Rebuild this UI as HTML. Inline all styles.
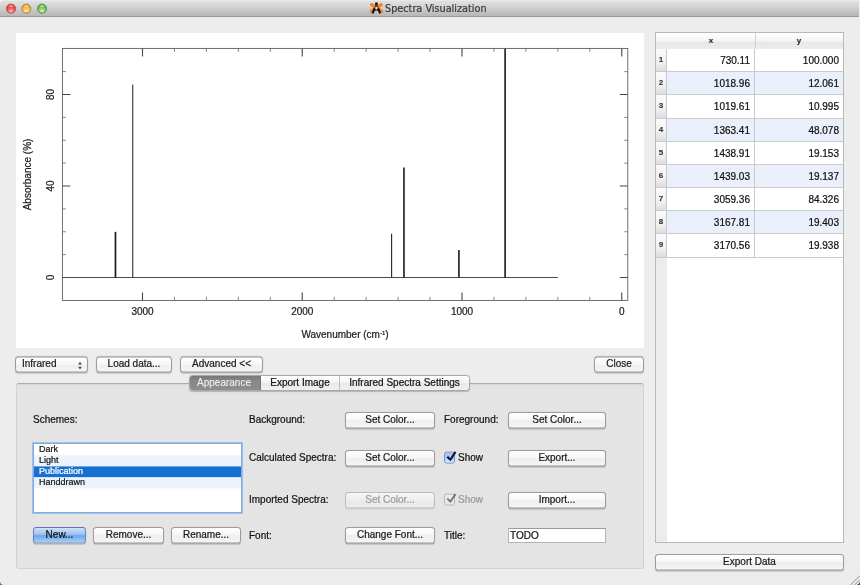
<!DOCTYPE html>
<html lang="en"><head><meta charset="utf-8"><title>Spectra Visualization</title>
<style>
html,body{margin:0;padding:0}
html{background:#fff}
body{width:860px;height:585px;overflow:hidden;background:#fff;position:relative;font-family:"Liberation Sans",sans-serif;font-size:10px;color:#141414;-webkit-text-stroke:0.22px}
.abs,.btn,.lbl{position:absolute;box-sizing:border-box}
.titlebar{position:absolute;left:0;top:0;width:860px;height:17px;box-sizing:border-box;background:linear-gradient(#eeeeee 0,#dfdfdf 10%,#cfcfcf 50%,#b7b7b7 100%);border-bottom:1px solid #999999;border-radius:4px 4px 0 0}
.tl{position:absolute;top:3px;transform:translateY(0.6px);width:10px;height:10px;border-radius:50%;box-sizing:border-box}
.tl.r{left:6px;background:radial-gradient(ellipse 3px 1.4px at 50% 20%,rgba(255,255,255,.75),rgba(255,255,255,0)),radial-gradient(circle at 50% 88%,#ffc8c4 0,#fa5a50 42%,#cf3a30 85%,#b03028 100%);border:0.5px solid #b04038}
.tl.y{left:21px;transform:translate(0.3px,0.6px);background:radial-gradient(ellipse 3px 1.4px at 50% 20%,rgba(255,255,255,.75),rgba(255,255,255,0)),radial-gradient(circle at 50% 88%,#fff2b4 0,#f9c24c 42%,#d89526 85%,#b87c1c 100%);border:0.5px solid #b08028}
.tl.g{left:37px;background:radial-gradient(ellipse 3px 1.4px at 50% 20%,rgba(255,255,255,.75),rgba(255,255,255,0)),radial-gradient(circle at 50% 88%,#dcf8c4 0,#88d062 42%,#58a33e 85%,#468a32 100%);border:0.5px solid #4f8a3a}
.title{position:absolute;left:385px;top:2px;font-family:"DejaVu Sans","Liberation Sans",sans-serif;font-size:9.7px;line-height:13px;color:#3a3a3a;white-space:nowrap}
.plot{position:absolute;left:16px;top:33px;display:block}
.btn{height:16px;border:1px solid #9c9c9c;border-radius:3.5px;background:linear-gradient(#ffffff,#f6f6f6 50%,#eeeeee 52%,#f5f5f5);box-shadow:0 0 0.7px rgba(0,0,0,.3),0 1px 1px rgba(0,0,0,.13);text-align:center;line-height:13.5px;font-size:10px;color:#1a1a1a;white-space:nowrap;transform:scaleY(1.035);transform-origin:50% 0}
.btn.tb{line-height:12px;transform:translateY(-0.5px)}
.btn.dis{color:#9c9c9c;border-color:#bcbcbc;background:linear-gradient(#f6f6f6,#eeeeee 50%,#e9e9e9 52%,#ededed);box-shadow:0 1px 0.5px rgba(0,0,0,.08)}
.btn.def{background:linear-gradient(#cfe2f8,#8fbdf0 50%,#6aa7ea 52%,#a9d2f7);border-color:#6c6ec2 #6a84c6 #7689bd;color:#111}
.lbl{line-height:12px;white-space:nowrap;margin-top:1px}
.pane{position:absolute;left:16px;top:383px;width:628px;height:186px;box-sizing:border-box;background:#e4e4e4;border:1px solid #d2d2d2;border-top-color:#ababab;box-shadow:inset 0 1px 0 rgba(0,0,0,.05);border-radius:3px}
.tabs{position:absolute;left:189px;top:375px;height:16px;display:flex;border:1px solid #a8a8a8;border-radius:3.5px;box-sizing:border-box;background:linear-gradient(#ffffff,#f2f2f2 50%,#e8e8e8 52%,#f0f0f0);overflow:hidden;box-shadow:0 0 0.7px rgba(0,0,0,.3),0 1px 1px rgba(0,0,0,.2)}
.tab{box-sizing:border-box;height:14px;line-height:13px;text-align:center;border-right:1px solid #bcbcbc;font-size:10px}
.tab:last-child{border-right:0}
.tab.sel{background:linear-gradient(#777777,#888888 35%,#8e8e8e);color:#f0f0f0;border-right-color:#777;-webkit-text-stroke:0.1px;padding-right:2px}
.list{position:absolute;left:34px;top:444px;width:207px;height:68px;box-sizing:border-box;background:#fff;box-shadow:0 0 0 0.8px #7ea6dc,0 0 0 2px #9dbfea;font-size:9px}
.list .in{transform:translateY(0.4px)}
.li{height:10.9px;line-height:11.9px;padding-left:5px}
.li.alt{background:#edf3fd}
.li.sel{background:#1670d2;color:#fff}
.chk{position:absolute;box-sizing:border-box;width:11px;height:11px;border:1px solid #7d7d7d;border-radius:2px;background:linear-gradient(#fdfdfd,#e2e2e2)}
.input{position:absolute;box-sizing:border-box;background:#fff;border:1px solid #b5b5b5;border-top-color:#9a9a9a;line-height:13px;padding-left:1px}
.table{position:absolute;left:655px;top:32px;width:189px;height:511px;box-sizing:border-box;border:1px solid #b8b8b8;background:#fff;overflow:hidden}
.table .gut{position:absolute;left:0;top:0;width:11px;height:100%;background:#ececec}
.th{position:absolute;left:0;top:0;width:187px;height:15.5px;background:linear-gradient(#ffffff,#f6f6f6 45%,#e8e8e8 60%,#ececec);border-bottom:1px solid #bcbcbc;font-size:8px;font-weight:bold;color:#333}
.th span{position:absolute;top:0;line-height:16px;text-align:center}
.tr{position:absolute;left:0;width:187px;height:23.18px;box-sizing:border-box;border-bottom:1px solid #cbcbcb}
.tr.alt .c{background:#e9effb}
.rh{position:absolute;left:0;top:0;width:11px;height:100%;box-sizing:border-box;background:linear-gradient(#fbfbfb,#f1f1f1 60%,#dddddd);border-right:1px solid #c8c8c8;font-size:8px;font-weight:bold;color:#333;line-height:22.4px;text-align:center;-webkit-text-stroke:0.1px}
.c{position:absolute;top:0;height:100%;box-sizing:border-box;text-align:right;padding-right:4px;line-height:23.8px;font-size:10px;color:#111;background:#fff}
.cx{left:11px;width:88px;border-right:1px solid #c8c8c8}
.cy{left:99px;width:88px}
.win{position:absolute;left:0;top:0;width:860px;height:585px;overflow:hidden;filter:blur(0.35px)}
</style></head><body>
<div class="win">
<div class="abs" style="left:0;top:0;width:860px;height:585px;background:#ededed;border-radius:4px 4px 0 0"></div>
<div class="titlebar">
<div class="tl r"></div><div class="tl y"></div><div class="tl g"></div>
<svg class="abs" style="left:369px;top:1px" width="15" height="14" viewBox="0 0 15 14">
<path d="M2.6 3.6L12.8 10.4M12.2 3.6L2.2 10.4" stroke="#f58220" stroke-width="3.1" stroke-linecap="round" fill="none"/>
<path d="M7.4 3.4L5.6 7.6M7.4 3.4L9.2 7.6" stroke="#5a2a08" stroke-width="1.3" stroke-linecap="round" fill="none"/>
<path d="M5.5 7.8L3.9 11.6M9.3 7.8L10.9 11.6" stroke="#141414" stroke-width="2.2" stroke-linecap="round" fill="none"/>
<circle cx="7.4" cy="2.7" r="1.5" fill="#141414"/>
<path d="M5.6 8.9h3.6" stroke="#141414" stroke-width="1.1"/>
<circle cx="7.4" cy="7" r="1.2" fill="#ffe3c4"/>
</svg>
<div class="title">Spectra Visualization</div>
</div>
<div class="abs" style="left:859px;top:0;width:1px;height:17px;background:#ececec"></div>
<svg class="plot" width="628" height="315" viewBox="16 33 628 315">
<rect x="16" y="33" width="628" height="315" fill="#fff"/>
<g stroke="#585858" stroke-width="0.85" fill="none">
<rect x="62.4" y="48.4" width="565.40" height="252.00"/>
<path d="M589.80 300.4v-3.6M589.80 48.4v3.6M557.85 300.4v-3.6M557.85 48.4v3.6M525.90 300.4v-3.6M525.90 48.4v3.6M493.95 300.4v-3.6M493.95 48.4v3.6M430.05 300.4v-3.6M430.05 48.4v3.6M398.10 300.4v-3.6M398.10 48.4v3.6M366.15 300.4v-3.6M366.15 48.4v3.6M334.20 300.4v-3.6M334.20 48.4v3.6M270.30 300.4v-3.6M270.30 48.4v3.6M238.35 300.4v-3.6M238.35 48.4v3.6M206.40 300.4v-3.6M206.40 48.4v3.6M174.45 300.4v-3.6M174.45 48.4v3.6M62.4 254.62h3.6M627.8 254.62h-3.6M62.4 231.75h3.6M627.8 231.75h-3.6M62.4 208.88h3.6M627.8 208.88h-3.6M62.4 163.12h3.6M627.8 163.12h-3.6M62.4 140.25h3.6M627.8 140.25h-3.6M62.4 117.38h3.6M627.8 117.38h-3.6M62.4 71.62h3.6M627.8 71.62h-3.6" stroke-width="0.7"/>
<path d="M621.75 300.4v-8M621.75 48.4v8M462.00 300.4v-8M462.00 48.4v8M302.25 300.4v-8M302.25 48.4v8M142.50 300.4v-8M142.50 48.4v8M62.4 277.50h8M627.8 277.50h-8M62.4 186.00h8M627.8 186.00h-8M62.4 94.50h8M627.8 94.50h-8" stroke-width="1.1" stroke="#444"/>
</g>
<g stroke="#1a1a1a" stroke-width="1" fill="none">
<path d="M62.4 277.5H557.85" stroke-width="1.1" stroke="#4a4a4a"/>
<path d="M505.11 277.5V48.75" stroke-width="1.6"/>
<path d="M458.92 277.5V249.91" stroke-width="1.6"/>
<path d="M403.95 277.5V167.52" stroke-width="1.6"/>
<path d="M391.62 277.5V233.69" stroke-width="1.05"/>
<path d="M132.75 277.5V84.60" stroke-width="1.0"/>
<path d="M115.47 277.5V231.89" stroke-width="1.7"/>
</g>
<g font-family="Liberation Sans, sans-serif" font-size="10" fill="#222" stroke="#222" stroke-width="0.22" text-anchor="middle">
<text x="142.50" y="314.7">3000</text>
<text x="302.25" y="314.7">2000</text>
<text x="462.00" y="314.7">1000</text>
<text x="621.75" y="314.7">0</text>
<text x="345" y="338.2">Wavenumber (cm<tspan font-size="6" dy="-3.5">-1</tspan><tspan dy="3.5">)</tspan></text>
<text transform="translate(53.6 277.50) rotate(-90)">0</text>
<text transform="translate(53.6 186.00) rotate(-90)">40</text>
<text transform="translate(53.6 94.50) rotate(-90)">80</text>
<text transform="translate(30.6 174.5) rotate(-90)">Absorbance (%)</text>
</g>
</svg>

<div class="btn tb" style="left:15px;top:357px;width:73px;text-align:left;padding-left:6px">Infrared
<svg class="abs" style="left:61px;top:2.5px" width="6" height="10" viewBox="0 0 6 10"><path d="M3 1.2L4.8 3.9H1.2zM3 9L1.2 6.3H4.8z" fill="#444"/></svg></div>
<div class="btn tb" style="left:96px;top:357px;width:76px">Load data...</div>
<div class="btn tb" style="left:180px;top:357px;width:83px">Advanced &lt;&lt;</div>
<div class="btn tb" style="left:594px;top:357px;width:50px">Close</div>

<div class="pane"></div>
<div class="tabs"><div class="tab sel" style="width:71px">Appearance</div><div class="tab" style="width:79px">Export Image</div><div class="tab" style="width:129px">Infrared Spectra Settings</div></div>

<div class="lbl" style="left:33px;top:413px">Schemes:</div>
<div class="list"><div class="in"><div class="li">Dark</div><div class="li alt">Light</div><div class="li sel">Publication</div><div class="li alt">Handdrawn</div></div></div>
<div class="btn def" style="left:33px;top:527px;width:53px">New...</div>
<div class="btn" style="left:93px;top:527px;width:71px">Remove...</div>
<div class="btn" style="left:171px;top:527px;width:70px">Rename...</div>

<div class="lbl" style="left:249px;top:413px">Background:</div>
<div class="lbl" style="left:249px;top:451px">Calculated Spectra:</div>
<div class="lbl" style="left:249px;top:493px">Imported Spectra:</div>
<div class="lbl" style="left:249px;top:529px">Font:</div>
<div class="btn" style="left:345px;top:412px;width:90px">Set Color...</div>
<div class="btn" style="left:345px;top:450px;width:90px">Set Color...</div>
<div class="btn dis" style="left:345px;top:492px;width:90px">Set Color...</div>
<div class="btn" style="left:345px;top:527px;width:90px">Change Font...</div>

<div class="lbl" style="left:444px;top:413px">Foreground:</div>
<div class="chk" style="left:444px;top:452px;height:12px;transform:translateY(-0.4px);background:linear-gradient(#b9bdf0,#a3c8f6 45%,#b5dcfb 75%,#e4f3ff);border-color:#7f8fd0;border-radius:2.5px"></div>
<svg class="abs" style="left:445px;top:450px" width="14" height="14" viewBox="0 0 14 14"><path d="M2.3 6.7L5.4 9.7L10.5 1.9" fill="none" stroke="#0c1430" stroke-width="2.1" stroke-linecap="butt" stroke-linejoin="miter"/></svg>
<div class="lbl" style="left:458px;top:451px">Show</div>
<div class="chk" style="left:444px;top:494px;height:12px;transform:translateY(-0.4px);border-color:#b9b9b9;border-radius:2.5px;background:linear-gradient(#ececec,#e6e6e6)"></div>
<svg class="abs" style="left:445px;top:492px;opacity:.6" width="14" height="14" viewBox="0 0 14 14"><path d="M2.3 6.7L5.4 9.7L10.5 1.9" fill="none" stroke="#222" stroke-width="1.8" stroke-linecap="butt" stroke-linejoin="miter"/></svg>
<div class="lbl" style="left:458px;top:493px;color:#9a9a9a">Show</div>
<div class="lbl" style="left:444px;top:529px">Title:</div>
<div class="btn" style="left:508px;top:412px;width:98px">Set Color...</div>
<div class="btn" style="left:508px;top:450px;width:98px">Export...</div>
<div class="btn" style="left:508px;top:492px;width:98px">Import...</div>
<div class="input" style="left:508px;top:528px;width:98px;height:15px">TODO</div>

<div class="table"><div class="gut"></div>
<div class="th"><span style="left:11px;width:88px;border-right:1px solid #d0d0d0;height:15px">x</span><span style="left:99px;width:88px">y</span></div>
<div class="tr " style="top:16.00px"><span class="rh">1</span><span class="c cx">730.11</span><span class="c cy">100.000</span></div>
<div class="tr alt" style="top:39.18px"><span class="rh">2</span><span class="c cx">1018.96</span><span class="c cy">12.061</span></div>
<div class="tr " style="top:62.36px"><span class="rh">3</span><span class="c cx">1019.61</span><span class="c cy">10.995</span></div>
<div class="tr alt" style="top:85.54px"><span class="rh">4</span><span class="c cx">1363.41</span><span class="c cy">48.078</span></div>
<div class="tr " style="top:108.72px"><span class="rh">5</span><span class="c cx">1438.91</span><span class="c cy">19.153</span></div>
<div class="tr alt" style="top:131.90px"><span class="rh">6</span><span class="c cx">1439.03</span><span class="c cy">19.137</span></div>
<div class="tr " style="top:155.08px"><span class="rh">7</span><span class="c cx">3059.36</span><span class="c cy">84.326</span></div>
<div class="tr alt" style="top:178.26px"><span class="rh">8</span><span class="c cx">3167.81</span><span class="c cy">19.403</span></div>
<div class="tr " style="top:201.44px"><span class="rh">9</span><span class="c cx">3170.56</span><span class="c cy">19.938</span></div>
</div>
<div class="btn" style="left:655px;top:554px;width:189px">Export Data</div>
<svg class="abs" style="left:846px;top:571px" width="14" height="14" viewBox="846 571 14 14"><path d="M859.7 575.8L850.5 585M859.7 579.8L854.5 585M859.7 583.6L858.3 585" stroke="#7a7a7a" stroke-width="0.8" fill="none"/></svg>
<div class="abs" style="left:0;top:582px;width:3px;height:3px;background:radial-gradient(circle at 100% 0,rgba(90,90,90,0) 2.2px,#6a6a6a 3.2px)"></div>
<div class="abs" style="left:857px;top:582px;width:3px;height:3px;background:radial-gradient(circle at 0 0,rgba(45,75,60,0) 2px,#35574a 3px)"></div>
</div>
</body></html>
